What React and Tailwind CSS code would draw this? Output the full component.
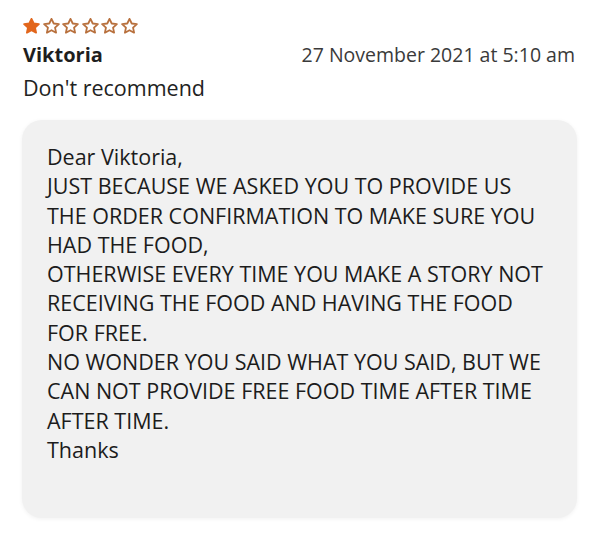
const Star = ({ filled }) => (
  <svg width="17" height="16" viewBox="0 0 24 23" className="shrink-0">
    <path
      d="M12 1.2l3.2 6.7 7.4.9-5.5 5 1.5 7.3L12 17.5l-6.6 3.6 1.5-7.3-5.5-5 7.4-.9z"
      fill={filled ? '#e2661c' : 'none'}
      stroke={filled ? '#e2661c' : '#b8703d'}
      strokeWidth="2.6"
      strokeLinejoin="round"
    />
  </svg>
)

const reply = [
  'Dear Viktoria,',
  'JUST BECAUSE WE ASKED YOU TO PROVIDE US',
  'THE ORDER CONFIRMATION TO MAKE SURE YOU',
  'HAD THE FOOD,',
  'OTHERWISE EVERY TIME YOU MAKE A STORY NOT',
  'RECEIVING THE FOOD AND HAVING THE FOOD',
  'FOR FREE.',
  'NO WONDER YOU SAID WHAT YOU SAID, BUT WE',
  'CAN NOT PROVIDE FREE FOOD TIME AFTER TIME',
  'AFTER TIME.',
  'Thanks',
]

export default function App() {
  return (
    <div className="w-[599px] h-[535px] bg-white font-['Open_Sans',sans-serif] text-[#222] overflow-hidden">
      <div className="pl-[23px] pr-[24px] pt-[17px]">
        {/* Rating */}
        <div className="flex gap-[2.5px] h-[17px] items-center">
          {[0, 1, 2, 3, 4, 5].map((i) => (
            <Star key={i} filled={i === 0} />
          ))}
        </div>

        {/* Name + date */}
        <div className="flex items-baseline justify-between mt-[7px]">
          <span className="text-[20px] font-bold leading-[28px] text-[#1e1e1e]">Viktoria</span>
          <span className="text-[19.5px] leading-[28px] text-[#3a3a3a]">27 November 2021 at 5:10 am</span>
        </div>

        <p className="text-[21.5px] leading-[32px] mt-[3px] text-[#222]">Don't recommend</p>
      </div>

      {/* Owner reply */}
      <div className="mx-[22px] mt-[16px] h-[398px] rounded-[20px] bg-[#f1f1f1] shadow-[0_1px_4px_rgba(0,0,0,0.06)] pl-[25px] pt-[22px]">
        {reply.map((line, i) => (
          <div key={i} className="text-[21.5px] leading-[29.3px] text-[#1c1c1c] whitespace-nowrap">
            {line}
          </div>
        ))}
      </div>
    </div>
  )
}
